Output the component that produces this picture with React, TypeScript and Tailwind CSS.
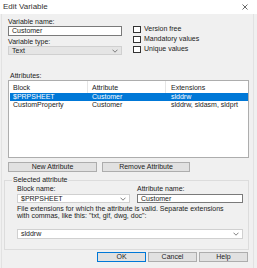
import React from "react";

function Chevron() {
  return (
    <svg width="6" height="4" viewBox="0 0 6 4" className="shrink-0">
      <polyline points="0.5,0.7 3,3.2 5.5,0.7" fill="none" stroke="#606060" strokeWidth="0.8" />
    </svg>
  );
}

function Check({ label }: { label: string }) {
  return (
    <div className="h-[10px] flex items-center">
      <div className="w-[8px] h-[7px] border border-[#333] bg-white shrink-0" />
      <span className="ml-[3px] leading-[8px]">{label}</span>
    </div>
  );
}

function Btn({ label, w, primary }: { label: string; w: string; primary?: boolean }) {
  return (
    <div
      className={`${w} h-[10px] flex items-center justify-center bg-[#e1e1e1] border ${
        primary ? "border-[#0078d7]" : "border-[#adadad]"
      } leading-[8px]`}
    >
      {label}
    </div>
  );
}

export default function App() {
  return (
    <div className="w-[257px] h-[268px] bg-[#f0f0f0] text-[7px] text-[#222] font-['Liberation_Sans',Arial,sans-serif] overflow-hidden">
      {/* title bar */}
      <div className="h-[14px] bg-white flex items-center justify-between pl-[3px] pr-[9px]">
        <span className="text-[8px] leading-[10px] text-[#333]">Edit Variable</span>
        <svg width="6" height="6" viewBox="0 0 6 6">
          <path d="M0.5 0.5 L5.5 5.5 M5.5 0.5 L0.5 5.5" stroke="#444" strokeWidth="0.8" />
        </svg>
      </div>

      <div className="ml-[1px] w-[253px] h-[254px] border-x border-[#e2e2e2]">
        {/* top row */}
        <div className="flex">
          <div className="ml-[6px] w-[114px] pt-[4px]">
            <div className="h-[8px] leading-[8px]">Variable name:</div>
            <div className="h-[10px] bg-white border border-[#7a7a7a] flex items-center pl-[3px] leading-[8px]">
              Customer
            </div>
            <div className="mt-[1px] h-[9px] leading-[9px]">Variable type:</div>
            <div className="h-[9px] bg-[#e5e5e5] border border-[#d0d0d0] flex items-center justify-between pl-[3px] pr-[3px] leading-[8px]">
              <span>Text</span>
              <Chevron />
            </div>
          </div>
          <div className="ml-[11px] pt-[10px]">
            <Check label="Version free" />
            <Check label="Mandatory values" />
            <Check label="Unique values" />
          </div>
        </div>

        {/* attributes */}
        <div className="mt-[17px] ml-[8px] h-[8px] leading-[8px]">Attributes:</div>
        <div className="ml-[6px] w-[241px] h-[78px] bg-white border border-[#adadad]">
          <div className="h-[12px] flex">
            <div className="w-[79px] pl-[4px] pt-[3px] leading-[8px] border-r border-[#e5e5e5]">Block</div>
            <div className="w-[78px] pl-[4px] pt-[3px] leading-[8px] border-r border-[#e5e5e5]">Attribute</div>
            <div className="flex-1 pl-[5px] pt-[3px] leading-[8px]">Extensions</div>
          </div>
          <div className="h-[8px] flex bg-[#0078d7] text-white ml-[1px] leading-[8px]">
            <div className="w-[78px] pl-[3px]">$PRPSHEET</div>
            <div className="w-[78px] pl-[4px]">Customer</div>
            <div className="flex-1 pl-[5px]">slddrw</div>
          </div>
          <div className="h-[8px] flex ml-[1px] leading-[8px]">
            <div className="w-[78px] pl-[3px]">CustomProperty</div>
            <div className="w-[78px] pl-[4px]">Customer</div>
            <div className="flex-1 pl-[5px]">slddrw, sldasm, sldprt</div>
          </div>
        </div>

        <div className="mt-[4px] ml-[6px] flex gap-[5px]">
          <Btn label="New Attribute" w="w-[89px]" />
          <Btn label="Remove Attribute" w="w-[88px]" />
        </div>

        {/* selected attribute group */}
        <div className="mt-[8px] ml-[2px] w-[245px] h-[70px] border border-[#dcdcdc]">
          <div className="-mt-[5px] ml-[7px] px-[1px] w-fit h-[8px] leading-[8px] bg-[#f0f0f0]">
            Selected attribute
          </div>
          <div className="mt-[1px] ml-[12px] flex gap-[7px]">
            <div className="w-[113px]">
              <div className="h-[8px] leading-[8px]">Block name:</div>
              <div className="mt-[1px] h-[9px] bg-white border border-[#d0d0d0] flex items-center justify-between pl-[3px] pr-[3px] leading-[8px]">
                <span>$PRPSHEET</span>
                <Chevron />
              </div>
            </div>
            <div className="w-[106px]">
              <div className="h-[8px] leading-[8px]">Attribute name:</div>
              <div className="mt-[1px] h-[9px] bg-white border border-[#7a7a7a] flex items-center pl-[3px] leading-[8px]">
                Customer
              </div>
            </div>
          </div>
          <div className="mt-[2px] ml-[12px] leading-[7px]">
            <div>File extensions for which the attribute is valid. Separate extensions</div>
            <div>with commas, like this: "txt, gif, dwg, doc":</div>
          </div>
          <div className="mt-[10px] ml-[12px] w-[226px] h-[10px] bg-white border border-[#d0d0d0] flex items-center justify-between pl-[3px] pr-[3px] leading-[8px]">
            <span>slddrw</span>
            <Chevron />
          </div>
        </div>

        <div className="mt-[2px] ml-[95px] flex gap-[2px]">
          <Btn label="OK" w="w-[49px]" primary />
          <Btn label="Cancel" w="w-[49px]" />
          <Btn label="Help" w="w-[49px]" />
        </div>
      </div>
    </div>
  );
}
